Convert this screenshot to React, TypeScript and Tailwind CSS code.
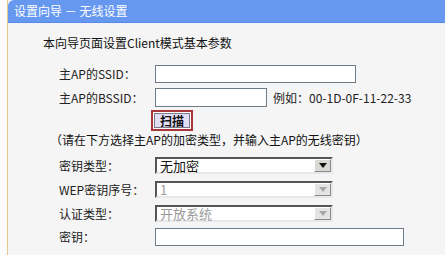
import React from "react";

const font = { fontFamily: '"Noto Sans CJK SC", "Noto Sans", sans-serif' };

function Arrow({ disabled }: { disabled?: boolean }) {
  return (
    <div
      className={`flex h-full w-[17px] items-center justify-center ${
        disabled ? "bg-[#e4e4e4]" : "bg-[#d8d8d4]"
      } border border-t-white border-l-white border-b-[#8a8a8a] border-r-[#8a8a8a]`}
    >
      <svg width="8" height="5" viewBox="0 0 8 5">
        <path d="M0 0 H8 L4 5 Z" fill={disabled ? "#a8a8a8" : "#111"} />
      </svg>
    </div>
  );
}

function Select({ value, disabled }: { value: string; disabled?: boolean }) {
  return (
    <div className="flex h-[17px] w-[178px] items-stretch border-2 border-t-[#555] border-l-[#555] border-b-[#e8e8e8] border-r-[#e8e8e8] bg-white">
      <div
        className={`flex flex-1 items-center pl-[3px] text-[13px] leading-none ${
          disabled ? "text-[#9a9a9a]" : "text-[#111]"
        }`}
      >
        {value}
      </div>
      <Arrow disabled={disabled} />
    </div>
  );
}

function Row({
  label,
  children,
  className,
}: {
  label: string;
  children: React.ReactNode;
  className: string;
}) {
  return (
    <div className={`flex items-center ${className}`}>
      <div className="w-[147px] shrink-0 pl-[51px] text-[12px] leading-none text-[#222] whitespace-nowrap">
        {label}
      </div>
      {children}
    </div>
  );
}

export default function App() {
  return (
    <div className="flex h-[255px] w-[445px] overflow-hidden bg-[#fcfcfc]" style={font}>
      <div className="w-[7px] shrink-0 bg-[#fcfcfc]" />
      <div className="w-[1px] shrink-0 bg-[#e6c88c]" />
      <div className="flex flex-1 flex-col bg-[#f5f5f5]">
        <div className="flex h-[23px] items-center rounded-tl-[6px] border-b border-[#5b8ae6] bg-[#6798f0] pl-[6px] text-[12px] text-white">
          设置向导 － 无线设置
        </div>
        <div className="h-[1px] bg-[#eef3fd]" />
        <div className="mt-[12px] h-[14px] pl-[35px] text-[12px] leading-[14px] text-[#111]">
          本向导页面设置Client模式基本参数
        </div>
        <Row label="主AP的SSID：" className="mt-[15px] h-[18px]">
          <div className="h-[18px] w-[201px] border border-[#6f7c88] bg-white" />
        </Row>
        <Row label="主AP的BSSID：" className="mt-[5px] h-[19px]">
          <div className="h-[19px] w-[112px] border border-[#6f7c88] bg-white" />
          <div className="ml-[6px] text-[12px] leading-none text-[#222]">例如：00-1D-0F-11-22-33</div>
        </Row>
        <div className="mt-[3px] flex h-[21px] pl-[143px]">
          <div className="flex h-[21px] w-[42px] items-center justify-center border-2 border-[#a8353a] bg-white p-[1px]">
            <div className="flex h-full w-full items-center justify-center border border-[#7a7a8a] bg-[#e2def4] text-[12px] leading-none font-bold text-[#111]">
              扫描
            </div>
          </div>
        </div>
        <div className="mt-[1px] h-[15px] pl-[42px] text-[12px] leading-[15px] text-[#111] whitespace-nowrap">
          （请在下方选择主AP的加密类型，并输入主AP的无线密钥）
        </div>
        <Row label="密钥类型：" className="mt-[10px] h-[17px]">
          <Select value="无加密" />
        </Row>
        <Row label="WEP密钥序号：" className="mt-[7px] h-[17px]">
          <Select value="1" disabled />
        </Row>
        <Row label="认证类型：" className="mt-[7px] h-[17px]">
          <Select value="开放系统" disabled />
        </Row>
        <Row label="密钥：" className="mt-[6px] h-[18px]">
          <div className="h-[18px] w-[249px] border border-[#6f7c88] bg-white" />
        </Row>
      </div>
    </div>
  );
}
